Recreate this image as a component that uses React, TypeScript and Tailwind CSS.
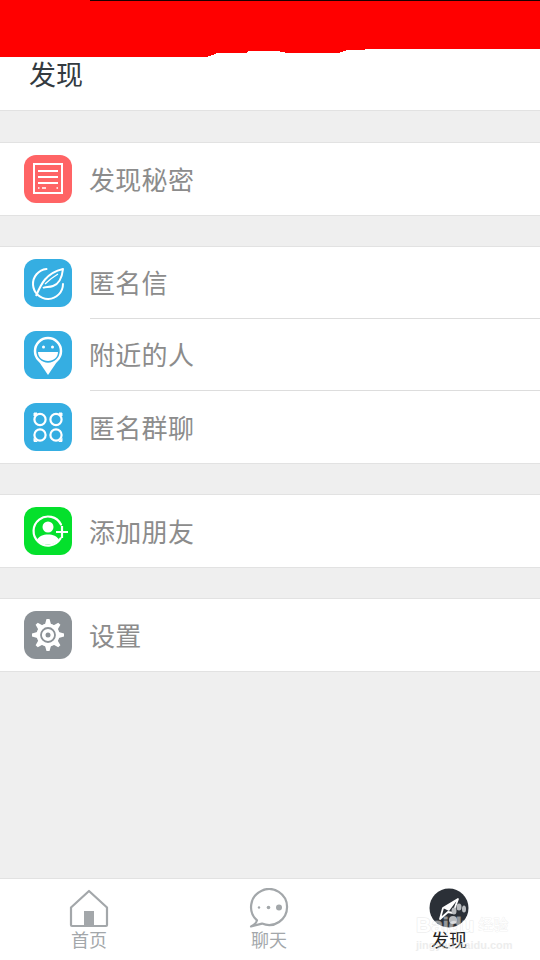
import React from "react";

const cjk = "font-['Liberation_Sans','Noto_Sans_CJK_SC',sans-serif]";

function DiscoverIcon() {
  return (
    <svg viewBox="0 0 48 48" className="w-12 h-12">
      <rect x="10" y="9" width="28" height="29" fill="none" stroke="#fff" strokeWidth="2" />
      <path d="M14 16h20M14 22h20M14 28h20" stroke="#fff" strokeWidth="2" />
      <path d="M14 33h1.500M18 33h4M32.500 33H34" stroke="#fff" strokeWidth="1.500" />
    </svg>
  );
}

function FeatherIcon() {
  return (
    <svg viewBox="0 0 48 48" className="w-12 h-12" fill="none" stroke="#fff" strokeWidth="2">
      <path d="M39 25a15 15 0 1 1-16.500-15" strokeLinecap="round" />
      <path d="M12 37C17 25 22 14 39 10c-1 9-4 15-10 17-4 1.500-8 .500-10 2" strokeLinejoin="round" />
      <path d="M21 25c4-4 8-7 13-10" strokeWidth="1.300" />
    </svg>
  );
}

function NearbyIcon() {
  return (
    <svg viewBox="0 0 48 48" className="w-12 h-12">
      <path d="M14.500 30l9.500 14 9.500-14z" fill="#fff" />
      <circle cx="24" cy="20" r="13" fill="#35aee2" stroke="#fff" strokeWidth="2.500" />
      <circle cx="19.500" cy="16" r="1.500" fill="#fff" />
      <circle cx="28.500" cy="16" r="1.500" fill="#fff" />
      <path d="M14 21h20c0 5.500-4.500 9-10 9s-10-3.500-10-9z" fill="#fff" />
    </svg>
  );
}

function GroupIcon() {
  return (
    <svg viewBox="0 0 48 48" className="w-12 h-12" fill="none" stroke="#fff" strokeWidth="2.200">
      <circle cx="16" cy="16.500" r="5.600" />
      <circle cx="32" cy="16.500" r="5.600" />
      <circle cx="16" cy="32" r="5.600" />
      <circle cx="32" cy="32" r="5.600" />
      <path d="M10 10h3l-3 3zM38 10h-3l3 3zM10 38.500h3l-3-3zM38 38.500h-3l3-3z" fill="#fff" strokeWidth="1" />
    </svg>
  );
}

function AddFriendIcon() {
  return (
    <svg viewBox="0 0 48 48" className="w-12 h-12">
      <path d="M37 17.500A14.500 14.500 0 1 0 36.500 31.500" fill="none" stroke="#fff" strokeWidth="2.200" strokeLinecap="round" />
      <circle cx="24" cy="20" r="5.500" fill="#fff" />
      <path d="M13 33c2-4 6-5.500 11-5.500S33 29 35 33c-2.500 3-6.500 4.500-11 4.500S15.500 36 13 33z" fill="#fff" />
      <path d="M32 25h12M38 19v12" stroke="#fff" strokeWidth="2.200" />
    </svg>
  );
}

function SettingsIcon() {
  const angles = [0, 45, 90, 135, 180, 225, 270, 315];
  return (
    <svg viewBox="0 0 48 48" className="w-12 h-12">
      {angles.map((a) => (
        <path key={a} d="M22.500 8h3l2 7h-7z" fill="#fff" transform={`rotate(${a} 24 24)`} />
      ))}
      <circle cx="24" cy="24" r="11.500" fill="#fff" />
      <circle cx="24" cy="24" r="7" fill="none" stroke="#8b9196" strokeWidth="1.800" />
      <circle cx="24" cy="24" r="2.500" fill="#8b9196" />
    </svg>
  );
}

function HomeIcon() {
  return (
    <svg viewBox="0 0 40 40" className="w-10 h-10">
      <path d="M2 19.500 20 3l18 16.500V37a1 1 0 0 1-1 1H3a1 1 0 0 1-1-1z" fill="none" stroke="#a3a7aa" strokeWidth="2.200" strokeLinejoin="round" />
      <rect x="15" y="23" width="10" height="15" fill="#a3a7aa" />
    </svg>
  );
}

function ChatIcon() {
  return (
    <svg viewBox="0 0 40 40" className="w-10 h-10">
      <path d="M8 32.400A18 18 0 1 1 13 35.600L2 38.500C5 37 7.500 35 8 32.400z" fill="none" stroke="#a3a7aa" strokeWidth="2.200" strokeLinejoin="round" />
      <circle cx="10" cy="19.500" r="1.200" fill="#a3a7aa" />
      <circle cx="19.500" cy="19.500" r="1.800" fill="#a3a7aa" />
      <circle cx="30" cy="19.500" r="3" fill="#a3a7aa" />
    </svg>
  );
}

function FindIcon() {
  return (
    <svg viewBox="0 0 40 40" className="w-10 h-10">
      <circle cx="20" cy="20" r="19.500" fill="#2b3037" />
      <path d="M29 11 14 20l-3 11 8-7 5 1z" fill="none" stroke="#fff" strokeWidth="1.800" strokeLinejoin="round" />
      <path d="M29 11 14 20l6 3z" fill="#fff" />
      <ellipse cx="25" cy="23" rx="2.500" ry="3.500" fill="#b9bcbf" />
      <ellipse cx="30" cy="19" rx="2.500" ry="3.500" fill="#b9bcbf" />
      <ellipse cx="35" cy="21" rx="2" ry="3.500" fill="#b9bcbf" />
      <ellipse cx="24" cy="32" rx="4" ry="4" fill="#b9bcbf" />
    </svg>
  );
}

const groups = [
  [{ label: "发现秘密", bg: "bg-[#ff6465]", Icon: DiscoverIcon }],
  [
    { label: "匿名信", bg: "bg-[#35aee2]", Icon: FeatherIcon },
    { label: "附近的人", bg: "bg-[#35aee2]", Icon: NearbyIcon },
    { label: "匿名群聊", bg: "bg-[#35aee2]", Icon: GroupIcon },
  ],
  [{ label: "添加朋友", bg: "bg-[#04e02c]", Icon: AddFriendIcon }],
  [{ label: "设置", bg: "bg-[#8b9196]", Icon: SettingsIcon }],
];

const tabs = [
  { label: "首页", Icon: HomeIcon, active: false },
  { label: "聊天", Icon: ChatIcon, active: false },
  { label: "发现", Icon: FindIcon, active: true },
];

export default function App() {
  return (
    <div className={`relative w-[540px] h-[960px] flex flex-col bg-[#efefef] overflow-hidden ${cjk}`}>
      {/* Header */}
      <header className="h-[111px] shrink-0 bg-white border-b border-[#e2e2e2] flex items-end pl-[29px] pb-[16px]">
        <h1 className="text-[27px] leading-[36px] font-normal text-[#333a40]">发现</h1>
      </header>

      {/* Menu groups */}
      <main className="flex-1 flex flex-col gap-[30px] pt-[31px]">
        {groups.map((rows, i) => (
          <section key={i} className="bg-white border-y border-[#e2e2e2]">
            {rows.map((row, j) => (
              <div key={row.label} className="h-[72px] flex items-center pl-[24px]">
                <div className={`w-12 h-12 shrink-0 rounded-xl ${row.bg}`}>
                  <row.Icon />
                </div>
                <div className={`ml-[18px] flex-1 h-full flex items-center text-[26px] text-[#8c8c8c] ${j < rows.length - 1 ? "border-b border-[#dddddd]" : ""}`}>
                  <span className="-ml-px mt-[4px] tracking-[0.3px]">{row.label}</span>
                </div>
              </div>
            ))}
          </section>
        ))}
      </main>

      {/* Bottom tabs */}
      <nav className="h-[82px] shrink-0 bg-white border-t border-[#e2e2e2] grid grid-cols-3">
        {tabs.map((tab) => (
          <div key={tab.label} className="flex flex-col items-center pt-[9px] pr-[2px]">
            <tab.Icon />
            <span className={`mt-[1px] text-[18px] leading-[24px] ${tab.active ? "text-[#222222]" : "text-[#a3a7aa]"}`}>{tab.label}</span>
          </div>
        ))}
      </nav>

      {/* Red scribble over the status bar */}
      <svg viewBox="0 0 540 60" className="absolute top-0 left-0 w-[540px] h-[60px]" shapeRendering="crispEdges">
        <path
          d="M0 0H540V49H368L361 50H347L340 52.700H286L278 51H249L247 52.700H218L213 55L206 57H0z"
          fill="#ff0000"
        />
        <rect x="90" y="0" width="450" height="1" fill="#1a0000" />
      </svg>

      {/* Watermark */}
      <div className="absolute left-[416px] top-[914px] w-[110px] text-white pointer-events-none opacity-50">
        <div className="flex items-center h-[22px] whitespace-nowrap text-[21px] leading-[22px] font-bold [-webkit-text-stroke:1px_#d4d4d4] [paint-order:stroke]">
          Baidu
          <span className="text-[15px] ml-[4px] font-normal [-webkit-text-stroke:0.5px_#d0d0d0]">经验</span>
        </div>
        <div className="text-[11px] leading-[12px] font-bold text-[#dcdcdc] mt-[3px] whitespace-nowrap">jingyan.baidu.com</div>
      </div>
    </div>
  );
}
